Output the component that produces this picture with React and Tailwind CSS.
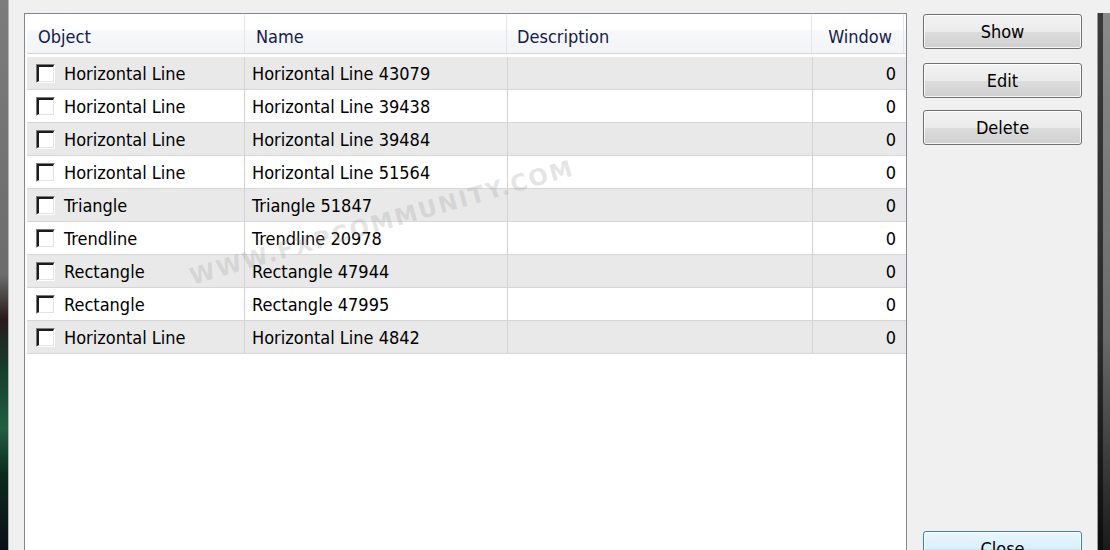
import { useState } from 'react';

const rows = [
    { object: 'Horizontal Line', name: 'Horizontal Line 43079', window: 0 },
    { object: 'Horizontal Line', name: 'Horizontal Line 39438', window: 0 },
    { object: 'Horizontal Line', name: 'Horizontal Line 39484', window: 0 },
    { object: 'Horizontal Line', name: 'Horizontal Line 51564', window: 0 },
    { object: 'Triangle', name: 'Triangle 51847', window: 0 },
    { object: 'Trendline', name: 'Trendline 20978', window: 0 },
    { object: 'Rectangle', name: 'Rectangle 47944', window: 0 },
    { object: 'Rectangle', name: 'Rectangle 47995', window: 0 },
    { object: 'Horizontal Line', name: 'Horizontal Line 4842', window: 0 },
];

function CheckBox({ checked, onChange }) {
    return (
        <button
            type="button"
            onClick={onChange}
            className="w-[19px] h-[19px] border border-t-[#7a7a7a] border-l-[#7a7a7a] border-b-white border-r-white shrink-0"
        >
            <div className="w-full h-full bg-white border-2 border-t-[#1c1c1c] border-l-[#1c1c1c] border-b-[#e3e3e3] border-r-[#e3e3e3] border-b-[1px] border-r-[1px] flex items-center justify-center text-[12px] leading-none">
                {checked ? '✓' : ''}
            </div>
        </button>
    );
}

function DialogButton({ children, isDefault, className }) {
    return (
        <button
            type="button"
            className={
                'shrink-0 w-[159px] h-[35px] rounded-[3px] border text-[18px] text-black shadow-[inset_0_0_0_1px_rgba(255,255,255,0.8)] ' +
                (isDefault
                    ? 'border-[#3c7fb1] bg-[linear-gradient(to_bottom,#eaf6fd_0%,#d9f0fc_50%,#bee6fd_51%,#a7d9f5_100%)] '
                    : 'border-[#707070] bg-[linear-gradient(to_bottom,#f2f2f2_0%,#ebebeb_50%,#dddddd_51%,#cfcfcf_100%)] ') +
                (className || '')
            }
        >
            {children}
        </button>
    );
}

export default function App() {
    const [checked, setChecked] = useState(rows.map(() => false));

    const toggle = (i) => {
        setChecked(checked.map((c, j) => (j === i ? !c : c)));
    };

    return (
        <div className="relative w-[1110px] h-[550px] overflow-hidden flex bg-[#f0f0f0] font-['DejaVu_Sans_Condensed','DejaVu_Sans',sans-serif]">
            {/* desktop behind the dialog */}
            <div className="w-[8px] h-full bg-[linear-gradient(to_bottom,#7c7c7c_0%,#6c6c6c_50%,#2a1a1c_58%,#163a2a_66%,#1f6040_78%,#0d2a1e_86%,#0a0f18_100%)]" />
            <div className="w-[1px] h-full bg-[#b4b4b4]" />

            <div className="flex-1 flex pt-[13px] pl-[15px]">
                {/* list view */}
                <div className="shrink-0 w-[883px] h-[560px] border border-[#828790] bg-white pl-[2px] pt-[1px]">
                    <div className="flex h-[39px] text-[18px] text-[#14204a] bg-[linear-gradient(to_bottom,#ffffff_0%,#ffffff_40%,#f7f8fa_41%,#f3f4f6_100%)] border-b border-[#d5d5d5]">
                        <div className="w-[218px] pl-[11px] pt-[8px] border-r border-[#e3e5e8]">Object</div>
                        <div className="w-[262px] pl-[11px] pt-[8px] border-r border-[#e3e5e8]">Name</div>
                        <div className="w-[305px] pl-[10px] pt-[8px] border-r border-[#e3e5e8]">Description</div>
                        <div className="w-[92px] pr-[11px] pt-[8px] text-right border-r border-[#e3e5e8]">Window</div>
                    </div>
                    <div className="h-[3px]" />
                    {rows.map((row, i) => (
                        <div
                            key={i}
                            className={
                                'flex h-[33px] text-[18px] text-black border-b border-[#d6d6d6] ' +
                                (i % 2 === 0 ? 'bg-[#e9e9e9]' : 'bg-white')
                            }
                        >
                            <div className="w-[218px] flex items-center pl-[9px] gap-[9px] border-r border-[#d3d3d3]">
                                <CheckBox checked={checked[i]} onChange={() => toggle(i)} />
                                <span className="pt-[1px]">{row.object}</span>
                            </div>
                            <div className="w-[263px] flex items-center pl-[7px] pt-[1px] border-r border-[#d3d3d3]">{row.name}</div>
                            <div className="w-[305px] border-r border-[#d3d3d3]" />
                            <div className="w-[92px] flex items-center justify-end pr-[9px] pt-[1px]">{row.window}</div>
                        </div>
                    ))}
                </div>

                {/* buttons */}
                <div className="flex flex-col ml-[16px] pt-[1px]">
                    <DialogButton>Show</DialogButton>
                    <DialogButton className="mt-[14px]">Edit</DialogButton>
                    <DialogButton className="mt-[12px]">Delete</DialogButton>
                    <DialogButton isDefault className="mt-[386px]">Close</DialogButton>
                </div>

                <div className="ml-auto w-[1px] h-full bg-[#9a9a9a]" />
                <div className="w-[5px] h-full bg-[linear-gradient(to_bottom,#3a3a3a_0%,#2c2c2c_60%,#0c0c0c_100%)]" />
                <div className="w-[7px] h-full bg-[linear-gradient(to_bottom,#8a8a8a_0%,#6a6a6a_60%,#1a1a1a_100%)]" />
            </div>

            {/* watermark */}
            <div className="pointer-events-none absolute left-[182px] top-[205px] w-[400px] text-center text-[23px] font-bold tracking-[2px] text-[#9a9a9a]/25 -rotate-[16deg] font-['DejaVu_Sans',sans-serif]">
                WWW.FXPCOMMUNITY.COM
            </div>
        </div>
    );
}
